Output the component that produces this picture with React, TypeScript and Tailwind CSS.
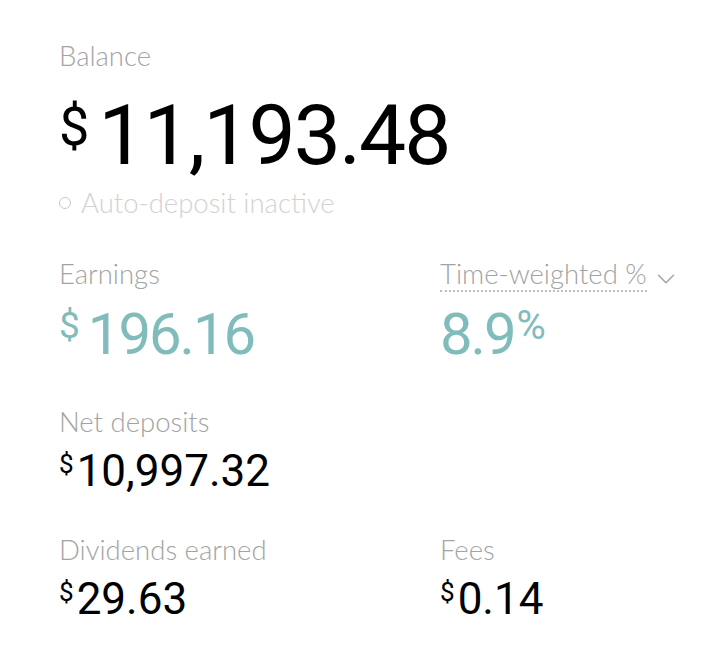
import { ChevronDown } from 'lucide-react';

const label = "font-['Lato',sans-serif] font-light text-[27.5px] leading-[32px] text-[#a3a3a3]";
const num = "font-['Roboto',sans-serif] font-normal";

function Small({ value }: { value: string }) {
  return (
    <div className={`${num} flex items-start text-black mt-[17px]`}>
      <span className="text-[26px] leading-[26px] mt-[-4px] mr-[3px]">$</span>
      <span className="text-[44px] leading-[32px]">{value}</span>
    </div>
  );
}

export default function App() {
  return (
    <main className="min-h-screen w-[716px] bg-white pl-[59px] pt-[40px]">
      <div className={label}>Balance</div>
      <div className={`${num} flex items-start text-black mt-[33px]`}>
        <span className="text-[54px] leading-[54px] mt-[-5px] mr-[9px]">$</span>
        <span className="text-[84px] leading-[62px] tracking-[-2px]">11,193.48</span>
      </div>
      <div className="mt-[20px] flex items-center gap-[10px] font-['Lato',sans-serif] font-light text-[27.5px] leading-[32px] text-[#d2d2d2]">
        <span className="h-[12px] w-[12px] rounded-full border border-[#c8c8c8]" />
        <span>Auto-deposit inactive</span>
      </div>

      <div className="mt-[39px] grid grid-cols-[381px_1fr]">
        <div>
          <div className={label}>Earnings</div>
          <div className={`${num} flex items-start text-[#7fbcbb] mt-[22px]`}>
            <span className="text-[37px] leading-[37px] mt-[-5px] mr-[8px]">$</span>
            <span className="text-[58px] leading-[44px] tracking-[-2px]">196.16</span>
          </div>
        </div>
        <div>
          <div className="flex items-center gap-[4px]">
            <span className={`${label} border-b-2 border-dotted border-[#bdbdbd]`}>Time-weighted %</span>
            <ChevronDown className="h-[30px] w-[30px] translate-y-[4px] text-[#a3a3a3]" strokeWidth={1.2} />
          </div>
          <div className={`${num} flex items-start text-[#7fbcbb] mt-[20px]`}>
            <span className="text-[58px] leading-[44px] tracking-[-2px]">8.9</span>
            <span className="text-[40px] leading-[40px] mt-[-6px] ml-[2px]">%</span>
          </div>
        </div>
      </div>

      <div className="mt-[50px]">
        <div className={label}>Net deposits</div>
        <Small value="10,997.32" />
      </div>

      <div className="mt-[47px] grid grid-cols-[381px_1fr]">
        <div>
          <div className={label}>Dividends earned</div>
          <Small value="29.63" />
        </div>
        <div>
          <div className={label}>Fees</div>
          <Small value="0.14" />
        </div>
      </div>
    </main>
  );
}
